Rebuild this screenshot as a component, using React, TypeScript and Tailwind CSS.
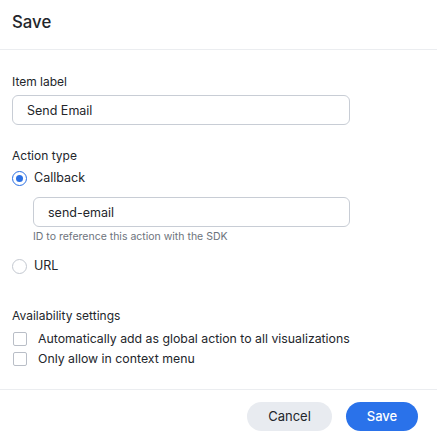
import { useState } from "react"

function Radio({ checked, label, onSelect }: { checked: boolean; label: string; onSelect: () => void }) {
  return (
    <button type="button" onClick={onSelect} className="flex h-[18px] items-center gap-[7px] text-left">
      <span
        className={`flex h-[15px] w-[15px] items-center justify-center rounded-full border ${
          checked ? "border-[#2b70e4] border-[1.5px]" : "border-[#c3c8d0]"
        }`}
      >
        {checked && <span className="h-[7px] w-[7px] rounded-full bg-[#2b70e4]" />}
      </span>
      <span className="text-[12.5px] text-[#23262b]">{label}</span>
    </button>
  )
}

function Checkbox({ label }: { label: string }) {
  const [checked, setChecked] = useState(false)
  return (
    <label className="flex h-[20px] cursor-pointer items-center gap-[11px] pl-px">
      <input type="checkbox" className="sr-only" checked={checked} onChange={() => setChecked(!checked)} />
      <span className="h-[14px] w-[14px] rounded-[2px] border border-[#b9bec7] bg-white" />
      <span className="text-[12.3px] text-[#23262b]">{label}</span>
    </label>
  )
}

export default function App() {
  const [actionType, setActionType] = useState<"callback" | "url">("callback")

  return (
    <div className="h-[441px] w-[437px] bg-white font-['Inter',sans-serif] text-[#23262b]">
      <div className="h-[50px] border-b border-[#ebedf0] px-3 pt-[11px]">
        <h1 className="text-[16.8px] leading-[22px] font-medium">Save</h1>
      </div>

      <div className="h-[339px] px-3 pt-[23px]">
        <p className="text-[12px] leading-[18px]">Item label</p>
        <input
          defaultValue="Send Email"
          className="mt-1 h-[30px] w-[338px] rounded-[6px] border border-[#c8cdd5] px-[14px] text-[12.5px] outline-none"
        />

        <p className="mt-[22px] text-[12px] leading-[18px]">Action type</p>
        <div className="mt-1">
          <Radio checked={actionType === "callback"} label="Callback" onSelect={() => setActionType("callback")} />
        </div>
        <div className="pl-[21px]">
          <input
            defaultValue="send-email"
            className="mt-[10px] h-[30px] w-[317px] rounded-[6px] border border-[#c8cdd5] px-[14px] text-[12.5px] outline-none"
          />
          <p className="mt-[3px] text-[10.5px] leading-[14px] text-[#6d737c]">ID to reference this action with the SDK</p>
        </div>
        <div className="mt-[13px]">
          <Radio checked={actionType === "url"} label="URL" onSelect={() => setActionType("url")} />
        </div>

        <p className="mt-8 text-[12px] leading-[18px]">Availability settings</p>
        <div className="mt-1">
          <Checkbox label="Automatically add as global action to all visualizations" />
          <Checkbox label="Only allow in context menu" />
        </div>
      </div>

      <div className="flex justify-end gap-[14px] border-t border-[#ebedf0] pt-3 pr-[19px]">
        <button type="button" className="h-[29px] w-[85px] rounded-full bg-[#e8ebf0] text-[13px] text-[#23262b]">
          Cancel
        </button>
        <button type="button" className="h-[29px] w-[72px] rounded-full bg-[#2a72ea] text-[13px] font-medium text-white">
          Save
        </button>
      </div>
    </div>
  )
}
